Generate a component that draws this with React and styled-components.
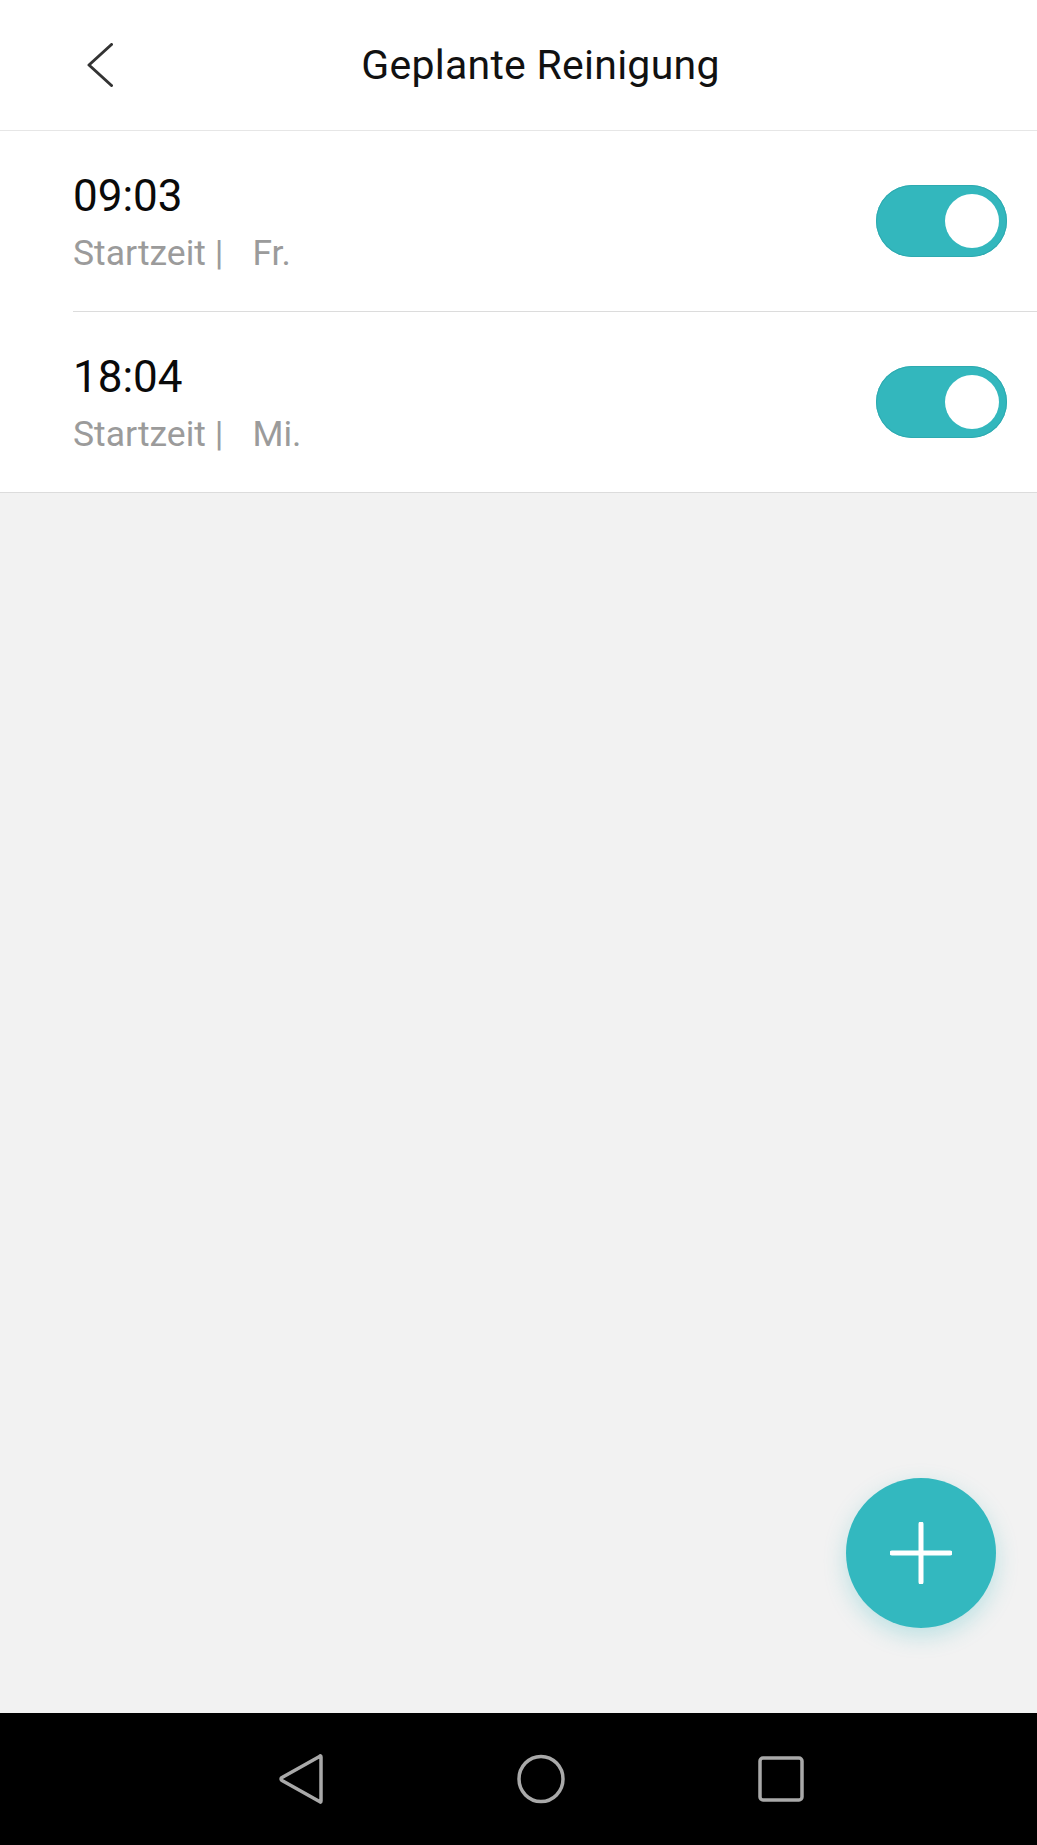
import React from 'react';
import styled, { createGlobalStyle } from 'styled-components';

const GlobalStyle = createGlobalStyle`
  html, body {
    margin: 0;
    padding: 0;
    background: #000;
  }
  * {
    box-sizing: border-box;
  }
`

const Screen = styled.div`
  width: 1037px;
  height: 1845px;
  display: flex;
  flex-direction: column;
  font-family: Roboto, "Noto Sans", sans-serif;
  background: #f2f2f2;
  overflow: hidden;
`

const Header = styled.header`
  height: 131px;
  display: grid;
  grid-template-columns: 1fr auto 1fr;
  align-items: center;
  padding-left: 44px;
  background: #fff;
  border-bottom: 1px solid #e6e6e6;
`

const BackButton = styled.button`
  justify-self: start;
  margin-left: 43px;
  padding: 0;
  border: none;
  background: none;
  display: flex;
  align-items: center;
  cursor: pointer;
`

const Title = styled.h1`
  margin: 0;
  font-size: 41px;
  font-weight: 400;
  color: #111;
  letter-spacing: 0.25px;
`

const List = styled.div`
  background: #fff;
  border-bottom: 1px solid #dcdcdc;
`

const Row = styled.div`
  height: ${p => (p.$divider ? 181 : 180)}px;
  margin-left: 73px;
  padding-right: 30px;
  display: flex;
  align-items: center;
  justify-content: space-between;
  border-bottom: ${p => (p.$divider ? '1px solid #dcdcdc' : 'none')};
`

const Info = styled.div`
  display: flex;
  flex-direction: column;
  gap: 11px;
  padding-top: 2px;
`

const Time = styled.div`
  font-size: 44px;
  line-height: 52px;
  color: #0a0a0a;
`

const Sub = styled.div`
  font-size: 35.5px;
  line-height: 41px;
  color: #9b9b9b;

  span {
    margin-left: 29px;
  }
`

const Toggle = styled.div`
  width: 131px;
  height: 72px;
  border-radius: 36px;
  background: #33b7bd;
  box-shadow: inset 0 0 0 1px #2eaab0;
  display: flex;
  align-items: center;
  justify-content: ${p => (p.$on ? 'flex-end' : 'flex-start')};
  padding: 0 8px;

  &::after {
    content: '';
    width: 54px;
    height: 54px;
    border-radius: 50%;
    background: #fff;
  }
`

const Content = styled.main`
  flex: 1;
  position: relative;
  background: #f2f2f2;
`

const Fab = styled.button`
  position: absolute;
  right: 41px;
  bottom: 85px;
  width: 150px;
  height: 150px;
  border-radius: 50%;
  border: none;
  background: #33b8bf;
  box-shadow: 0 8px 22px rgba(51, 184, 191, 0.28);
  display: flex;
  align-items: center;
  justify-content: center;
  padding: 0;
`

const NavBar = styled.nav`
  height: 132px;
  background: #000;
  display: flex;
  align-items: center;
  justify-content: center;
  gap: 192px;
  padding-left: 44px;
`

const NavIcon = styled.svg`
  width: 48px;
  height: 50px;
  display: block;
`

const schedules = [
  { time: '09:03', day: 'Fr.' },
  { time: '18:04', day: 'Mi.' },
]

const App = () => {
  return (
    <>
      <GlobalStyle />
      <Screen>
        <Header>
          <BackButton aria-label="Zurück">
            <svg width="26" height="44" viewBox="0 0 26 44">
              <path d="M24.5 1.5 L2 22 L24.5 42.5" fill="none" stroke="#333" strokeWidth="3" strokeLinecap="round" strokeLinejoin="round" />
            </svg>
          </BackButton>
          <Title>Geplante Reinigung</Title>
          <div />
        </Header>

        <List>
          {schedules.map((s, i) => (
            <Row key={s.time} $divider={i < schedules.length - 1}>
              <Info>
                <Time>{s.time}</Time>
                <Sub>Startzeit |<span>{s.day}</span></Sub>
              </Info>
              <Toggle $on />
            </Row>
          ))}
        </List>

        <Content>
          <Fab aria-label="Hinzufügen">
            <svg width="62" height="62" viewBox="0 0 62 62">
              <path d="M31 2 V60 M2 31 H60" stroke="#fff" strokeWidth="5" strokeLinecap="round" />
            </svg>
          </Fab>
        </Content>

        <NavBar>
          <NavIcon viewBox="0 0 48 50">
            <path d="M44 3 L44 47 Q44 49 42.5 47.5 L5 26.5 Q3 25 5 23.5 L42.5 2.5 Q44 1 44 3 Z" fill="none" stroke="#a9a9a9" strokeWidth="3.5" strokeLinejoin="round" />
          </NavIcon>
          <NavIcon viewBox="0 0 48 50">
            <ellipse cx="24" cy="25" rx="22" ry="22.5" fill="none" stroke="#a9a9a9" strokeWidth="3.5" />
          </NavIcon>
          <NavIcon viewBox="0 0 48 50">
            <rect x="3" y="4" width="42" height="42" rx="3" fill="none" stroke="#a9a9a9" strokeWidth="3.5" />
          </NavIcon>
        </NavBar>
      </Screen>
    </>
  )
}

export default App
